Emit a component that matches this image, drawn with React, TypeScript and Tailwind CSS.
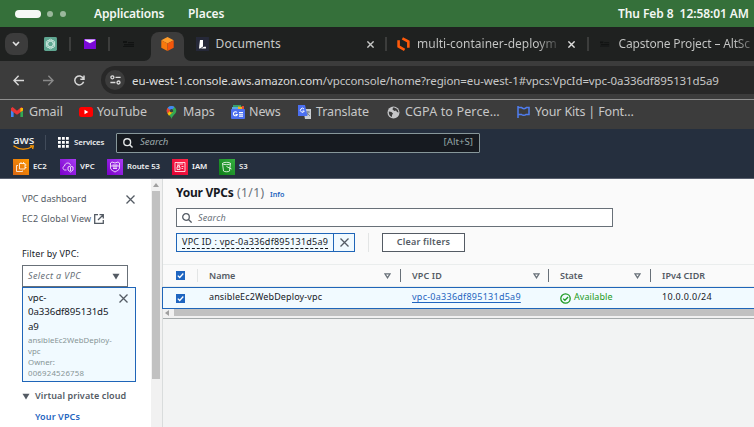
import type { ReactNode } from "react";

function Caret({ className = "" }: { className?: string }) {
  return (
    <svg className={className} width="8" height="7" viewBox="0 0 8 7">
      <path d="M0.5 0.8h7L4 6.5z" fill="#545b64" />
    </svg>
  );
}

function SortIcon() {
  return (
    <svg width="7" height="6" viewBox="0 0 7 6" fill="none" stroke="#687078" strokeWidth="1.3">
      <path d="M0.9 0.8h5.2L3.5 4.8z" />
    </svg>
  );
}

function Close({ size = 9, color = "#545b64", w = 1.3 }: { size?: number; color?: string; w?: number }) {
  return (
    <svg width={size} height={size} viewBox="0 0 9 9" stroke={color} strokeWidth={w}>
      <path d="M0.5 0.5l8 8M8.5 0.5l-8 8" />
    </svg>
  );
}

function Check() {
  return (
    <span className="flex h-[9px] w-[9px] shrink-0 items-center justify-center bg-[#1f65c0]">
      <svg width="9" height="9" viewBox="0 0 9 9" fill="none" stroke="#fff" strokeWidth="1.3">
        <path d="M1.8 4.6l1.9 1.9L7.3 2.5" />
      </svg>
    </span>
  );
}

function Altschool({ w }: { w: number }) {
  return (
    <svg width={w} height="8" viewBox="0 0 12 8" fill="#111312">
      <path d="M0 1h4v2H0zM1 4h10v1.4H1zM5 2h6v1.2H5zM0 6h11v1H0z" />
    </svg>
  );
}

function TopBar() {
  return (
    <div className="flex h-[27px] shrink-0 items-center bg-[#35703a] text-[12px] font-semibold text-[#f4f7f4]">
      <i className="ml-[15px] h-[8px] w-[26px] rounded-full bg-[#f6f8f6]" />
      <i className="ml-[6px] h-[6px] w-[6px] rounded-full bg-[#9ab89c]" />
      <i className="ml-[7px] h-[6px] w-[6px] rounded-full bg-[#9ab89c]" />
      <span className="ml-[28px] w-[94px] tracking-[-0.15px]">Applications</span>
      <span className="w-[430px] tracking-[-0.05px]">Places</span>
      <span className="whitespace-pre tracking-[-0.08px]">Thu Feb 8  12:58:01 AM</span>
    </div>
  );
}

function Tabs() {
  return (
    <div className="flex h-[34px] shrink-0 items-center bg-[#1f2120] text-[12px] text-[#c7c8c7]">
      <span className="ml-[5px] flex h-[22px] w-[23px] items-center justify-center rounded-[8px] bg-[#3c3c3c]">
        <svg width="8" height="6" viewBox="0 0 8 6" fill="none" stroke="#e3e3e3" strokeWidth="1.6">
          <path d="M1 1l3 3 3-3" />
        </svg>
      </span>
      <svg className="ml-4" width="13" height="14" viewBox="0 0 13 14" fill="none" stroke="#d3ebe3">
        <rect width="13" height="14" rx="1.5" fill="#5fa691" stroke="none" />
        <g strokeWidth="0.8">
          <ellipse cx="6.5" cy="7" rx="2.7" ry="4.8" />
          <ellipse cx="6.5" cy="7" rx="2.7" ry="4.8" transform="rotate(60 6.5 7)" />
          <ellipse cx="6.5" cy="7" rx="2.7" ry="4.8" transform="rotate(120 6.5 7)" />
        </g>
      </svg>
      <i className="ml-[12px] h-[14px] w-[2px] bg-[#3c3d3c]" />
      <svg className="ml-[13px]" width="12" height="10" viewBox="0 0 12 10">
        <path d="M0 0h12v10H0z" fill="#7a08d8" />
        <path d="M1 0.5h10v1L6 4.2 1 1.5z" fill="#f5eaff" />
      </svg>
      <i className="ml-[12px] h-[14px] w-[2px] bg-[#3c3d3c]" />
      <span className="ml-[13px] w-[28px]"><Altschool w={12} /></span>
      <span className="relative flex h-[29px] w-[33px] items-center justify-center self-end rounded-t-[8px] bg-[#3c3c3c]">
        <svg className="absolute -left-[7px] bottom-0" width="7" height="7"><path d="M7 0v7H0a7 7 0 0 0 7-7z" fill="#3c3c3c" /></svg>
        <svg className="absolute -right-[7px] bottom-0" width="7" height="7"><path d="M0 0v7h7a7 7 0 0 1-7-7z" fill="#3c3c3c" /></svg>
        <svg className="-mt-[5px]" width="13" height="14" viewBox="0 0 13 14">
          <path d="M6.5 0l6.2 3.2L6.5 6.6 0.3 3.2z" fill="#ff9d2b" />
          <path d="M0.3 3.2l6.2 3.4V14L0.3 10.7z" fill="#f9790d" />
          <path d="M12.7 3.2L6.5 6.6V14l6.2-3.3z" fill="#f4560a" />
        </svg>
      </span>
      <svg className="ml-[12px]" width="13" height="14" viewBox="0 0 13 14">
        <path d="M0 0h13v14H0z" fill="#252838" />
        <path d="M4 3h3v6.4L4.2 11.5H3z" fill="#fff" />
        <path d="M5 11.5l3-1.8h2v1.8z" fill="#fff" />
      </svg>
      <span className="ml-[7px] w-[152px] tracking-[0.05px]">Documents</span>
      <Close size={7} color="#c7c8c7" w={1.8} />
      <i className="ml-[11px] h-[14px] w-[2px] bg-[#3c3d3c]" />
      <svg className="ml-[10px]" width="13" height="14" viewBox="0 0 13 14" fill="none" stroke="#ff5a0a" strokeWidth="2.6">
        <path d="M1.600 3.200v6.300l6 3.300M5.400 1.400l6 3.200v6.200" />
      </svg>
      <span className="ml-[7px] w-[151px] whitespace-nowrap bg-linear-to-r from-[#c7c8c7] from-80% to-[#303231] to-95% bg-clip-text text-transparent">multi-container-deploym</span>
      <Close size={7} color="#dededd" w={1.8} />
      <i className="ml-[12px] h-[14px] w-[2px] bg-[#3c3d3c]" />
      <span className="ml-[11px] w-[19px]"><Altschool w={10} /></span>
      <span className="w-[136px] whitespace-nowrap bg-linear-to-r from-[#c7c8c7] from-85% to-[#4d4e4d] bg-clip-text tracking-[-0.16px] text-transparent">Capstone Project – AltSc</span>
    </div>
  );
}

function AddressBar() {
  return (
    <div className="flex h-[38px] shrink-0 items-center bg-[#3c3c3c]">
      <svg className="ml-[13px]" width="11" height="11" viewBox="0 0 11 11" fill="none" stroke="#d8d8d8" strokeWidth="1.4">
        <path d="M11 5.5H1M5.6 0.8L1 5.5l4.6 4.7" />
      </svg>
      <svg className="ml-[19px]" width="11" height="11" viewBox="0 0 11 11" fill="none" stroke="#8a8a8a" strokeWidth="1.4">
        <path d="M0 5.5h10M5.4 0.8L10 5.5l-4.6 4.7" />
      </svg>
      <svg className="ml-[20px]" width="11" height="11" viewBox="0 0 11 11" fill="none" stroke="#d8d8d8" strokeWidth="1.5">
        <path d="M9.6 6.8A4.5 4.5 0 1 1 9.3 3.3M10 0.4v3.8H6.3" />
      </svg>
      <div className="ml-[16px] flex h-[28px] flex-1 items-center rounded-l-full bg-[#282828] text-[11.5px]">
        <span className="ml-[4px] flex h-[20px] w-[20px] items-center justify-center rounded-full bg-[#3c3c3c]">
          <svg width="11" height="10" viewBox="0 0 11 10" fill="none" stroke="#dcdcdc" strokeWidth="1.3">
            <circle cx="2.4" cy="2.3" r="1.5" />
            <path d="M5.5 2.3H10.6M0.4 7.5h5" />
            <circle cx="8.5" cy="7.5" r="1.5" />
          </svg>
        </span>
        <span className="ml-[7px] mt-px whitespace-nowrap tracking-[-0.1px] text-[#c7c7c7]">
          <span className="text-[#dcdddd]">eu-west-1.console.aws.amazon.com</span>/vpcconsole/home?region=eu-west-1#vpcs:VpcId=vpc-0a336df895131d5a9
        </span>
      </div>
    </div>
  );
}

function Bookmark({ icon, children, className }: { icon: ReactNode; children: ReactNode; className: string }) {
  return (
    <span className={"flex shrink-0 items-center whitespace-nowrap " + className}>
      <span className="flex w-[18px] shrink-0 items-center">{icon}</span>
      {children}
    </span>
  );
}

function Bookmarks() {
  return (
    <div className="flex h-[30px] shrink-0 items-center border-t border-[#8f8f8f] bg-[#3c3c3c] pb-[5px] pl-[11px] text-[12.5px] tracking-[-0.1px] text-[#c7c7c7]">
      <Bookmark className="w-[68px]" icon={
        <svg width="12" height="10" viewBox="0 0 12 10">
          <path d="M0 1h2.6v9H0z" fill="#4285f4" /><path d="M9.4 1H12v9H9.4z" fill="#34a853" />
          <path d="M0 1.2L1.6 0 6 3.7 10.4 0 12 1.2v2.2L6 7.8 0 3.4z" fill="#ea3535" />
          <path d="M9.4 1L12 1v2.6L9.4 5z" fill="#fbbc04" />
        </svg>}>Gmail</Bookmark>
      <Bookmark className="w-[86px]" icon={
        <svg width="14" height="10" viewBox="0 0 14 10"><rect width="14" height="10" rx="2.5" fill="#f00" /><path d="M5.5 2.8v4.4L9.3 5z" fill="#fff" /></svg>}>YouTube</Bookmark>
      <Bookmark className="w-[66px]" icon={
        <svg className="ml-[1px]" width="11" height="13" viewBox="0 0 11 13">
          <path d="M5.5 0a4.8 4.8 0 0 1 4.8 4.8C10.3 8 6.6 9 5.5 13 4.5 9 0.7 8 0.7 4.8A4.8 4.8 0 0 1 5.5 0z" fill="#34a853" />
          <path d="M1.7 1.8L5 4.5 1.5 7.4A4.8 4.8 0 0 1 1.7 1.8z" fill="#ea4335" />
          <path d="M1.7 1.8A4.8 4.8 0 0 1 8.5 1.1L5 5z" fill="#4285f4" />
          <path d="M1.5 7.4L5 4l2 2-4 3.7z" fill="#fbbc04" />
          <circle cx="5.5" cy="4.7" r="1.7" fill="#3c3c3c" />
        </svg>}>Maps</Bookmark>
      <Bookmark className="w-[67px]" icon={
        <svg width="14" height="14" viewBox="0 0 14 14">
          <path d="M2 0h8v4H2z" fill="#34a06a" /><path d="M1 2h7v3H1z" fill="#59a8e0" />
          <path d="M7 1.5l6 0.5v3H7z" fill="#f2b51d" /><path d="M11 1h2v4h-2z" fill="#e5483b" />
          <rect y="4" width="14" height="10" rx="1" fill="#4b6ff0" />
          <path d="M6 7.5A2 2 0 1 0 6.3 9.5H4.5M8 7.5h4M8 9.3h4M8 11.1h4" stroke="#fff" fill="none" strokeWidth="1.1" />
        </svg>}>News</Bookmark>
      <Bookmark className="w-[89px]" icon={
        <svg width="13" height="14" viewBox="0 0 13 14">
          <path d="M5 4h8v10H7z" fill="#c9cdd2" /><path d="M8 7h4M10 6v1c0 2-1 3-2 4M9 8l3 3" stroke="#73808c" fill="none" strokeWidth="0.9" />
          <path d="M0 0h7l2.500 11H0z" fill="#4b6ff0" />
          <path d="M6 4A2 2 0 1 0 6.3 6H4.5" stroke="#fff" fill="none" />
        </svg>}>Translate</Bookmark>
      <Bookmark className="w-[130px] tracking-[0.15px]" icon={
        <svg width="13" height="13" viewBox="0 0 13 13">
          <circle cx="6.5" cy="6.5" r="6" fill="#c5c6c8" />
          <path d="M1.8 5.5L4.5 6 6 7.5 5 9v2C3 10.5 1.5 8.5 1.8 5.5zM6 1.5L5.5 3.5 7.5 5l1.5-.5 1 1.5 1.5.5C11.5 4 9.5 1.5 6 1.5z" fill="#3c3c3c" />
        </svg>}>CGPA to Perce…</Bookmark>
      <Bookmark className="tracking-[-0.15px]" icon={
        <svg width="13" height="12" viewBox="0 0 13 12" fill="none" stroke="#4f7df0" strokeWidth="1.5">
          <path d="M1 0v12M1 1.5h3.5c1 1.5 4 1.5 5 0H12V8.500H9c-1 1-3.500 1-4.500 0H1" />
        </svg>}>Your Kits | Font…</Bookmark>
    </div>
  );
}

function Service({ name, from, to, className, children }: { name: string; from: string; to: string; className: string; children: ReactNode }) {
  return (
    <span className={"flex shrink-0 items-center whitespace-nowrap " + className}>
      <svg className="mr-[4px] shrink-0" width="16" height="16" viewBox="0 0 16 16" fill="none" stroke="#fff" strokeWidth="0.8">
        <defs>
          <linearGradient id={"fill-" + name.replace(" ", "")} x1="0" y1="1" x2="1" y2="0">
            <stop stopColor={from} /><stop offset="1" stopColor={to} />
          </linearGradient>
        </defs>
        <rect width="16" height="16" stroke="none" fill={`url(#fill-${name.replace(" ", "")})`} />
        {children}
      </svg>
      {name}
    </span>
  );
}

function AwsNav() {
  return (
    <div className="flex h-[50px] shrink-0 flex-col border-b border-[#585f6d] bg-[#252f3e] text-[7.8px] font-semibold text-[#f0f1f2]">
      <div className="flex h-[27px] items-center">
        <div className="ml-[13px] flex h-[14px] w-[32px] flex-col">
          <span className="h-[9px] text-[11.5px] font-medium leading-[7px]">aws</span>
          <svg width="21" height="5" viewBox="0 0 21 5" fill="none" stroke="#f90" strokeWidth="1.3">
            <path d="M0.5 0.8C6 5 14 5 19 1.8M17 0.8h3.3L19.6 4" />
          </svg>
        </div>
        <i className="h-[15px] w-px bg-[#414b5a]" />
        <svg className="ml-[12px]" width="11" height="11" viewBox="0 0 11 11" fill="#fff">
          <path d="M0 0h2.8v2.8H0zM4 0h2.8v2.8H4zM8 0h2.8v2.8H8zM0 4h2.8v2.8H0zM4 4h2.8v2.8H4zM8 4h2.8v2.8H8zM0 8h2.8v2.8H0zM4 8h2.8v2.8H4zM8 8h2.8v2.8H8z" />
        </svg>
        <span className="ml-[5px] mt-px w-[42px] tracking-[-0.1px]">Services</span>
        <div className="flex h-[20px] w-[364px] items-center rounded-[1px] border border-[#87979a] bg-[#161a20] text-[9.7px] font-normal">
          <svg className="ml-[6px]" width="10" height="10" viewBox="0 0 10 10" fill="none" stroke="#e4e7e8" strokeWidth="1.4">
            <circle cx="4.2" cy="4.2" r="3.4" /><path d="M6.7 6.7L9.5 9.5" />
          </svg>
          <span className="ml-[7px] flex-1 italic tracking-[-0.1px] text-[#9ba7a9]">Search</span>
          <span className="mr-[6px] text-[#95a5a6]">[Alt+S]</span>
        </div>
      </div>
      <div className="flex h-[22px] items-center pb-px pl-[13px]">
        <Service name="EC2" from="#d86613" to="#ff9900" className="w-[47px]">
          <path d="M6.500 4.500h5.500v5.500H6.500zM5 6.500H3.500v6h6V11.500M8 4.500V3M10.500 4.500V3M12 6h1.500M12 8.500h1.500" />
        </Service>
        <Service name="VPC" from="#7a00c8" to="#a93bf5" className="w-[47px]">
          <path d="M6.5 11H4.5C2.5 10.5 2.5 7.5 4.5 7 5 3.5 9.5 3 10.5 6M8 8l2.5-1L13 8v3l-2.5 2L8 11zM10.5 8v4" />
        </Service>
        <Service name="Route 53" from="#7a00c8" to="#a93bf5" className="w-[65px] tracking-[-0.06px]">
          <path d="M3.5 4L5 3l3 1 3-1 1.5 1v5c0 2-3 3-4.5 4-1.5-1-4.5-2-4.5-4zM5.5 6h5M6 8h4M6 9.5h4M4 7h8" />
        </Service>
        <Service name="IAM" from="#e00035" to="#ff2848" className="w-[47px]">
          <path d="M3 3.5h10v9H3zM5 10.500V8h3v2.500zM5.500 8V6.500h2V8M9.500 7.500h2M9.500 9.500h1.500M5 5h6" />
        </Service>
        <Service name="S3" from="#0e7d18" to="#35ae40" className="">
          <path d="M3.5 4.5c0-1.500 8-1.500 8 0s-8 1.500-8 0zl1 7.500c1 1 5 1 6 0l1-7.500M7.500 7.500l5 2.500" />
        </Service>
      </div>
    </div>
  );
}

function Sidebar() {
  return (
    <div className="flex h-full w-[163px] shrink-0 border-r border-[#d9dcdc] bg-white text-[9px] text-[#545b64]">
      <div className="flex w-[151px] flex-col pl-[22px]">
        <div className="mt-[13px] flex h-[14px] items-center">
          <span className="w-[104px]">VPC dashboard</span>
          <Close />
        </div>
        <div className="mt-[6px] flex h-[14px] items-center">
          <span className="w-[72px] whitespace-nowrap tracking-[0.12px]">EC2 Global View</span>
          <svg width="10" height="10" viewBox="0 0 10 10" fill="none" stroke="#545b64" strokeWidth="1.3">
            <path d="M4 0.7H0.7V9.3H9.3V6M5.5 0.7h3.8v3.8M9.3 0.7L4 6" />
          </svg>
        </div>
        <div className="mt-[21px] h-[14px] leading-[14px] tracking-[0.15px] text-[#16191f]">Filter by VPC:</div>
        <div className="mt-[4px] flex h-[22px] w-[106px] items-center border border-[#687078] pl-[5px]">
          <span className="w-[84px] italic tracking-[0.4px] text-[#687078]">Select a VPC</span>
          <Caret />
        </div>
        <div className="relative flex h-[95px] w-[114px] flex-col border border-[#1f65b8] bg-[#f1faff] pl-[5px] pt-[3px] text-[#16191f]">
          <span className="text-[9.7px] leading-[14.3px] tracking-[-0.08px]">vpc-<br />0a336df895131d5<br />a9</span>
          <span className="mt-[1px] text-[7.800px] leading-[11px] tracking-[0.04px] text-[#879596]">ansibleEc2WebDeploy-<br />vpc<br />Owner:<br /><span className="tracking-[0.22px]">006924526758</span></span>
          <span className="absolute right-[7px] top-[6px] flex"><Close /></span>
        </div>
        <div className="mt-[7px] flex h-[14px] items-center whitespace-nowrap text-[9px] font-semibold tracking-[0.1px]">
          <Caret className="mr-[5px]" />
          Virtual private cloud
        </div>
        <div className="mt-[7px] h-[14px] pl-[13px] font-semibold leading-[14px] tracking-[0.12px] text-[#1f65c0]">Your VPCs</div>
      </div>
      <div className="flex w-[11px] flex-col items-start bg-[#f1f1f1] pl-px">
        <svg className="ml-px mt-[4px]" width="6" height="4"><path d="M0 4l3-4 3 4z" fill="#a0a0a0" /></svg>
        <i className="mt-[4px] h-[188px] w-[8px] bg-[#c1c1c1]" />
      </div>
    </div>
  );
}

function Main() {
  return (
    <div className="flex min-w-0 flex-1 flex-col bg-[#f2f3f3] text-[9px] text-[#16191f]">
      <div className="flex h-[85px] shrink-0 flex-col bg-[#fafafa] pl-[13px]">
        <div className="mt-[5px] flex h-[18px] items-baseline whitespace-nowrap">
          <span className="w-[61px] text-[12px] font-bold tracking-[-0.25px]">Your VPCs</span>
          <span className="w-[33px] text-[12px] tracking-[0.4px] text-[#687078]">(1/1)</span>
          <span className="text-[7.2px] font-semibold text-[#1f65c0]">Info</span>
        </div>
        <div className="mt-[6px] flex h-[19px] w-[437px] shrink-0 items-center border border-[#687078] bg-white">
          <svg className="ml-[5px]" width="10" height="10" viewBox="0 0 10 10" fill="none" stroke="#545b64" strokeWidth="1.3">
            <circle cx="4" cy="4" r="3.3" /><path d="M6.5 6.5L9.6 9.6" />
          </svg>
          <span className="ml-[6px] italic tracking-[0.15px] text-[#687078]">Search</span>
        </div>
        <div className="mt-[6px] flex h-[19px] shrink-0 items-stretch">
          <div className="flex w-[179px] border border-[#1f65b8] bg-[#f1faff]">
            <div className="flex w-[157px] items-center border-r border-[#1f65b8] pl-[5px]">
              <span className="h-[13px] w-[146px] whitespace-nowrap border-b border-dashed border-[#16191f] leading-[12px] tracking-[0.24px]">VPC ID : vpc-0a336df895131d5a9</span>
            </div>
            <div className="flex flex-1 items-center justify-center"><Close /></div>
          </div>
          <i className="ml-[13px] w-px bg-[#e3e5e5]" />
          <div className="ml-[13px] flex w-[83px] items-center justify-center border border-[#545b64] bg-white pb-px font-semibold tracking-[0.2px] text-[#545b64]">Clear filters</div>
        </div>
      </div>
      <div className="flex h-[23px] shrink-0 items-center border-y border-[#eaeded] bg-[#fafafa] pl-[13px] font-semibold text-[#545b64]">
        <Check />
        <i className="ml-[12px] h-[13px] w-px bg-[#e3e5e5]" />
        <span className="ml-[11px] w-[175px]">Name</span>
        <SortIcon />
        <i className="ml-[9px] h-[13px] w-px bg-[#687078]" />
        <span className="ml-[11px] w-[121px] tracking-[0.1px]">VPC ID</span>
        <SortIcon />
        <i className="ml-[8px] h-[13px] w-px bg-[#687078]" />
        <span className="ml-[11px] w-[74px]">State</span>
        <SortIcon />
        <i className="ml-[9px] h-[13px] w-px bg-[#687078]" />
        <span className="ml-[11px] tracking-[0.05px]">IPv4 CIDR</span>
      </div>
      <div className="-ml-px flex h-[22px] shrink-0 items-center whitespace-nowrap border border-r-0 border-[#1f65b8] bg-[#f1faff] pl-[13px]">
        <Check />
        <span className="mb-[2px] ml-[24px] w-[203px] tracking-[0.13px]">ansibleEc2WebDeploy-vpc</span>
        <span className="mb-[2px] w-[148px] tracking-[0.26px] text-[#1f65c0] underline underline-offset-2">vpc-0a336df895131d5a9</span>
        <svg className="mr-[3px]" width="11" height="11" viewBox="0 0 11 11" fill="none" stroke="#1d9a24" strokeWidth="1.3">
          <circle cx="5.5" cy="5.5" r="4.7" /><path d="M3.2 5.6l1.7 1.7 3.2-3.3" />
        </svg>
        <span className="mb-[2px] w-[88px] tracking-[0.07px] text-[#1d9a24]">Available</span>
        <span className="mb-[2px] tracking-[0.3px]">10.0.0.0/24</span>
      </div>
      <div className="flex h-[10px] shrink-0 border-b border-[#a5abac] bg-[#f1f1f1]">
        <svg className="ml-[2px] mt-[1px]" width="4" height="6"><path d="M4 0v6L0 3z" fill="#a0a0a0" /></svg>
        <i className="ml-[5px] h-[7px] flex-1 bg-[#c1c1c1]" />
      </div>
    </div>
  );
}

export default function App() {
  return (
    <div className="flex h-[427px] w-[754px] flex-col overflow-hidden bg-white font-['Noto_Sans','Open_Sans',sans-serif]">
      <TopBar />
      <Tabs />
      <AddressBar />
      <Bookmarks />
      <AwsNav />
      <div className="flex min-h-0 flex-1">
        <Sidebar />
        <Main />
      </div>
    </div>
  );
}
